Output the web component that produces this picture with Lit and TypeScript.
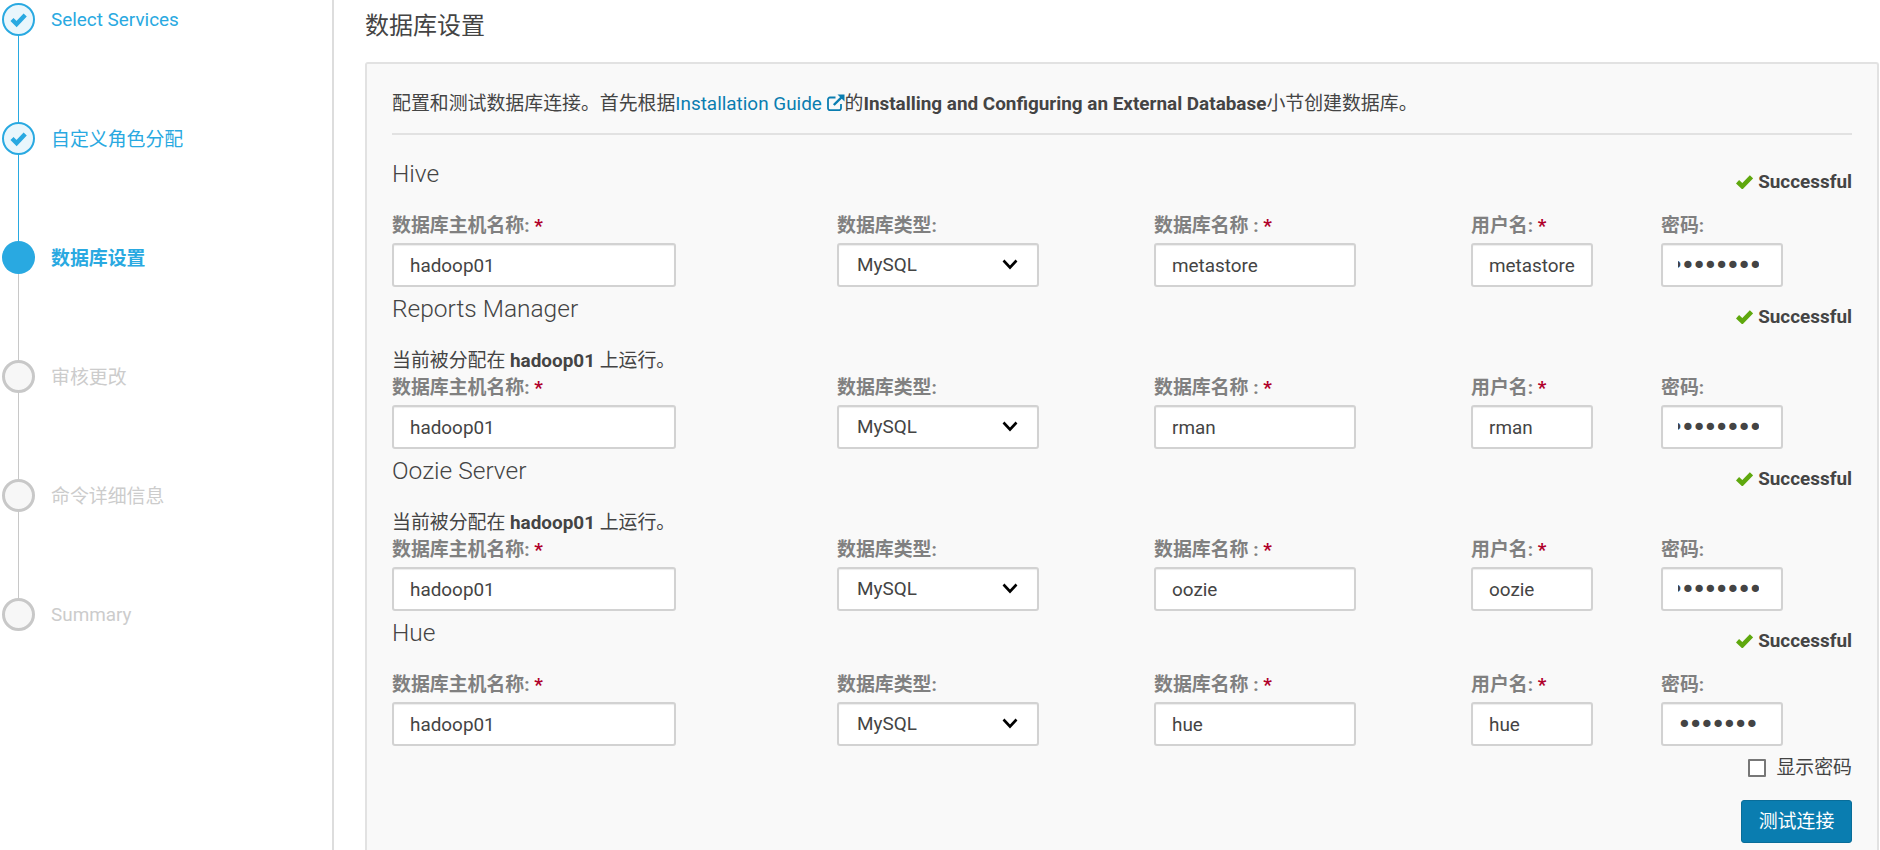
import { LitElement, html, css, svg } from "lit";
import { customElement } from "lit/decorators.js";

const steps = [
  { t: "Select Services", s: "done", latin: true },
  { t: "自定义角色分配", s: "done", latin: false },
  { t: "数据库设置", s: "active", latin: false },
  { t: "审核更改", s: "todo", latin: false },
  { t: "命令详细信息", s: "todo", latin: false },
  { t: "Summary", s: "todo", latin: true },
];

const sections = [
  { name: "Hive", note: false, db: "metastore", pw: "123456789" },
  { name: "Reports Manager", note: true, db: "rman", pw: "123456789" },
  { name: "Oozie Server", note: true, db: "oozie", pw: "123456789" },
  { name: "Hue", note: false, db: "hue", pw: "1234567" },
];

const stepCheck = svg`<polyline points="10,16.5 14.6,21 23.2,12" fill="none" stroke="#29a9e1" stroke-width="4.4" />`;

@customElement("app-root")
export class AppRoot extends LitElement {
  static styles = css`
    :host {
      display: block;
      height: 850px;
      overflow: hidden;
      background: #fff;
      font-family: Roboto, "Noto Sans CJK SC", sans-serif;
      font-size: 18.9px;
      line-height: 22px;
      color: #444;
    }
    * { box-sizing: border-box; }
    .layout { display: flex; height: 850px; }
    aside {
      width: 334px;
      flex: none;
      border-right: 2px solid #ddd;
      padding: 3px 0 0 2px;
    }
    .step {
      position: relative;
      height: 119px;
      display: flex;
      align-items: flex-start;
      gap: 16px;
    }
    .step:not(:last-child)::after {
      content: "";
      position: absolute;
      left: 15.75px;
      top: 33px;
      width: 1.5px;
      height: 86px;
      background: #c8c8c8;
    }
    .step.done::after { background: #29a9e1 !important; }
    .dot {
      width: 33px;
      height: 33px;
      flex: none;
      border-radius: 50%;
      display: block;
    }
    .done .dot { background: #e9f6fc; border: 2px solid #29a9e1; }
    .active .dot { background: #29a9e1; }
    .todo .dot { background: #f7f7f7; border: 3px solid #c8c8c8; }
    .dot svg { display: block; margin: -2px; }
    .step-label { line-height: 35px; color: #29a9e1; }
    .step-label.latin { line-height: 33px; }
    .active .step-label { font-weight: 700; }
    .todo .step-label { color: #ccc; }

    main { flex: 1; min-width: 0; padding: 0 1px 0 31px; }
    h1 {
      margin: 0;
      height: 62px;
      padding-top: 11px;
      font-size: 24px;
      line-height: 30px;
      font-weight: 400;
      color: #444;
    }
    .panel {
      background: #f9f9f9;
      border: 2px solid #e2e2e2;
      border-bottom: none;
      border-radius: 3px 3px 0 0;
      padding: 0 25px 0 25px;
      height: 800px;
    }
    .intro {
      height: 71px;
      padding-top: 29px;
      border-bottom: 2px solid #e2e2e2;
      margin-bottom: 23px;
    }
    .intro a { color: #0a7db0; text-decoration: none; }
    .ext { vertical-align: -2px; }
    section { height: 135px; }
    section.has-note { height: 162px; }
    .head {
      display: flex;
      justify-content: space-between;
      align-items: flex-start;
      height: 57px;
    }
    h2 {
      margin: 0;
      font-size: 24.5px;
      line-height: 32px;
      font-weight: 300;
      color: #444;
    }
    .ok {
      display: flex;
      align-items: center;
      gap: 5px;
      margin-top: 13px;
      font-weight: 700;
      color: #444;
    }
    .note { margin-bottom: 5px; color: #444; }
    .fields {
      display: grid;
      grid-template-columns: 445px 317px 317px 190px 122px;
    }
    label { display: block; margin-bottom: 6px; font-weight: 700; color: #808080; white-space: nowrap; }
    .star { color: #b0002a; }
    input[type="text"], input[type="password"], select {
      display: block;
      height: 44px;
      margin: 0;
      padding: 0 16px;
      background: #fff;
      border: 2px solid #d2d2d2;
      border-radius: 3px;
      box-shadow: inset 0 1px 1px rgba(0, 0, 0, 0.075);
      font: inherit;
      color: #444;
      outline: none;
    }
    input[type="password"] {
      font-family: "DejaVu Sans", sans-serif;
      font-size: 25px;
      letter-spacing: -3.5px;
      padding: 0 18px 0 14px;
    }
    input[type="password"].scrolled { padding: 0 22px 0 15px; }
    .w-l { width: 284px; }
    .w-m { width: 202px; }
    .w-s { width: 122px; }
    .select { position: relative; width: 202px; }
    select { appearance: none; width: 100%; padding-left: 18px; }
    .select svg { position: absolute; left: 165px; top: 16px; pointer-events: none; }
    .show-row {
      display: flex;
      justify-content: flex-end;
      align-items: center;
      gap: 10px;
      margin-top: 5px;
      height: 22px;
    }
    .box {
      width: 18px;
      height: 18px;
      margin: 0;
      appearance: none;
      background: #fff;
      border: 2px solid #777;
      border-radius: 1px;
    }
    .actions { display: flex; justify-content: flex-end; margin-top: 21px; }
    button {
      width: 111px;
      height: 43px;
      padding: 0;
      background: #0a7db0;
      border: 1px solid #096d99;
      border-radius: 3px;
      color: #fff;
      font: inherit;
    }
  `;

  updated() {
    this.renderRoot.querySelectorAll<HTMLInputElement>("input.scrolled").forEach((i) => {
      i.scrollLeft = i.scrollWidth;
    });
  }

  renderSection(s: (typeof sections)[number]) {
    return html`
      <section class=${s.note ? "has-note" : ""}>
        <div class="head">
          <h2>${s.name}</h2>
          <div class="ok">
            <svg width="17" height="14" viewBox="0 0 17 14">
              <polyline points="1.5,6.8 6.3,11.3 15.5,1.8" fill="none" stroke="#5fa80e" stroke-width="4.6" />
            </svg>
            Successful
          </div>
        </div>
        ${s.note ? html`<div class="note">当前被分配在 <b>hadoop01</b> 上运行。</div>` : ""}
        <div class="fields">
          <div>
            <label>数据库主机名称: <span class="star">*</span></label>
            <input class="w-l" type="text" .value=${"hadoop01"} />
          </div>
          <div>
            <label>数据库类型:</label>
            <div class="select">
              <select><option>MySQL</option></select>
              <svg width="16" height="11" viewBox="0 0 16 11">
                <polyline points="1.5,1.5 8,8.5 14.5,1.5" fill="none" stroke="#000" stroke-width="2.6" />
              </svg>
            </div>
          </div>
          <div>
            <label>数据库名称 : <span class="star">*</span></label>
            <input class="w-m" type="text" .value=${s.db} />
          </div>
          <div>
            <label>用户名: <span class="star">*</span></label>
            <input class="w-s" type="text" .value=${s.db} />
          </div>
          <div>
            <label>密码:</label>
            <input class="w-s ${s.pw.length > 7 ? "scrolled" : ""}" type="password" .value=${s.pw} />
          </div>
        </div>
      </section>
    `;
  }

  render() {
    return html`
      <div class="layout">
        <aside>
          ${steps.map(
            (st) => html`
              <div class="step ${st.s}">
                <span class="dot">
                  ${st.s === "done" ? html`<svg width="33" height="33" viewBox="0 0 33 33">${stepCheck}</svg>` : ""}
                </span>
                <span class="step-label ${st.latin ? "latin" : ""}">${st.t}</span>
              </div>
            `
          )}
        </aside>
        <main>
          <h1>数据库设置</h1>
          <div class="panel">
            <div class="intro">
              配置和测试数据库连接。首先根据<a href="#">Installation Guide
                <svg class="ext" width="18" height="18" viewBox="0 0 18 18" fill="none" stroke="#0a7db0" stroke-width="1.8">
                  <path d="M14 10v4.2a2 2 0 0 1-2 2H3a2 2 0 0 1-2-2V5.5a2 2 0 0 1 2-2h5.5" />
                  <path d="M6.8 11 14.5 3.3" stroke-width="2.4" />
                  <path d="M10.5 0.5h7v7z" fill="#0a7db0" stroke="none" />
                </svg></a>的<b>Installing and Configuring an External Database</b>小节创建数据库。
            </div>
            ${sections.map((s) => this.renderSection(s))}
            <div class="show-row">
              <input class="box" type="checkbox" id="show" />
              <span>显示密码</span>
            </div>
            <div class="actions"><button>测试连接</button></div>
          </div>
        </main>
      </div>
    `;
  }
}
